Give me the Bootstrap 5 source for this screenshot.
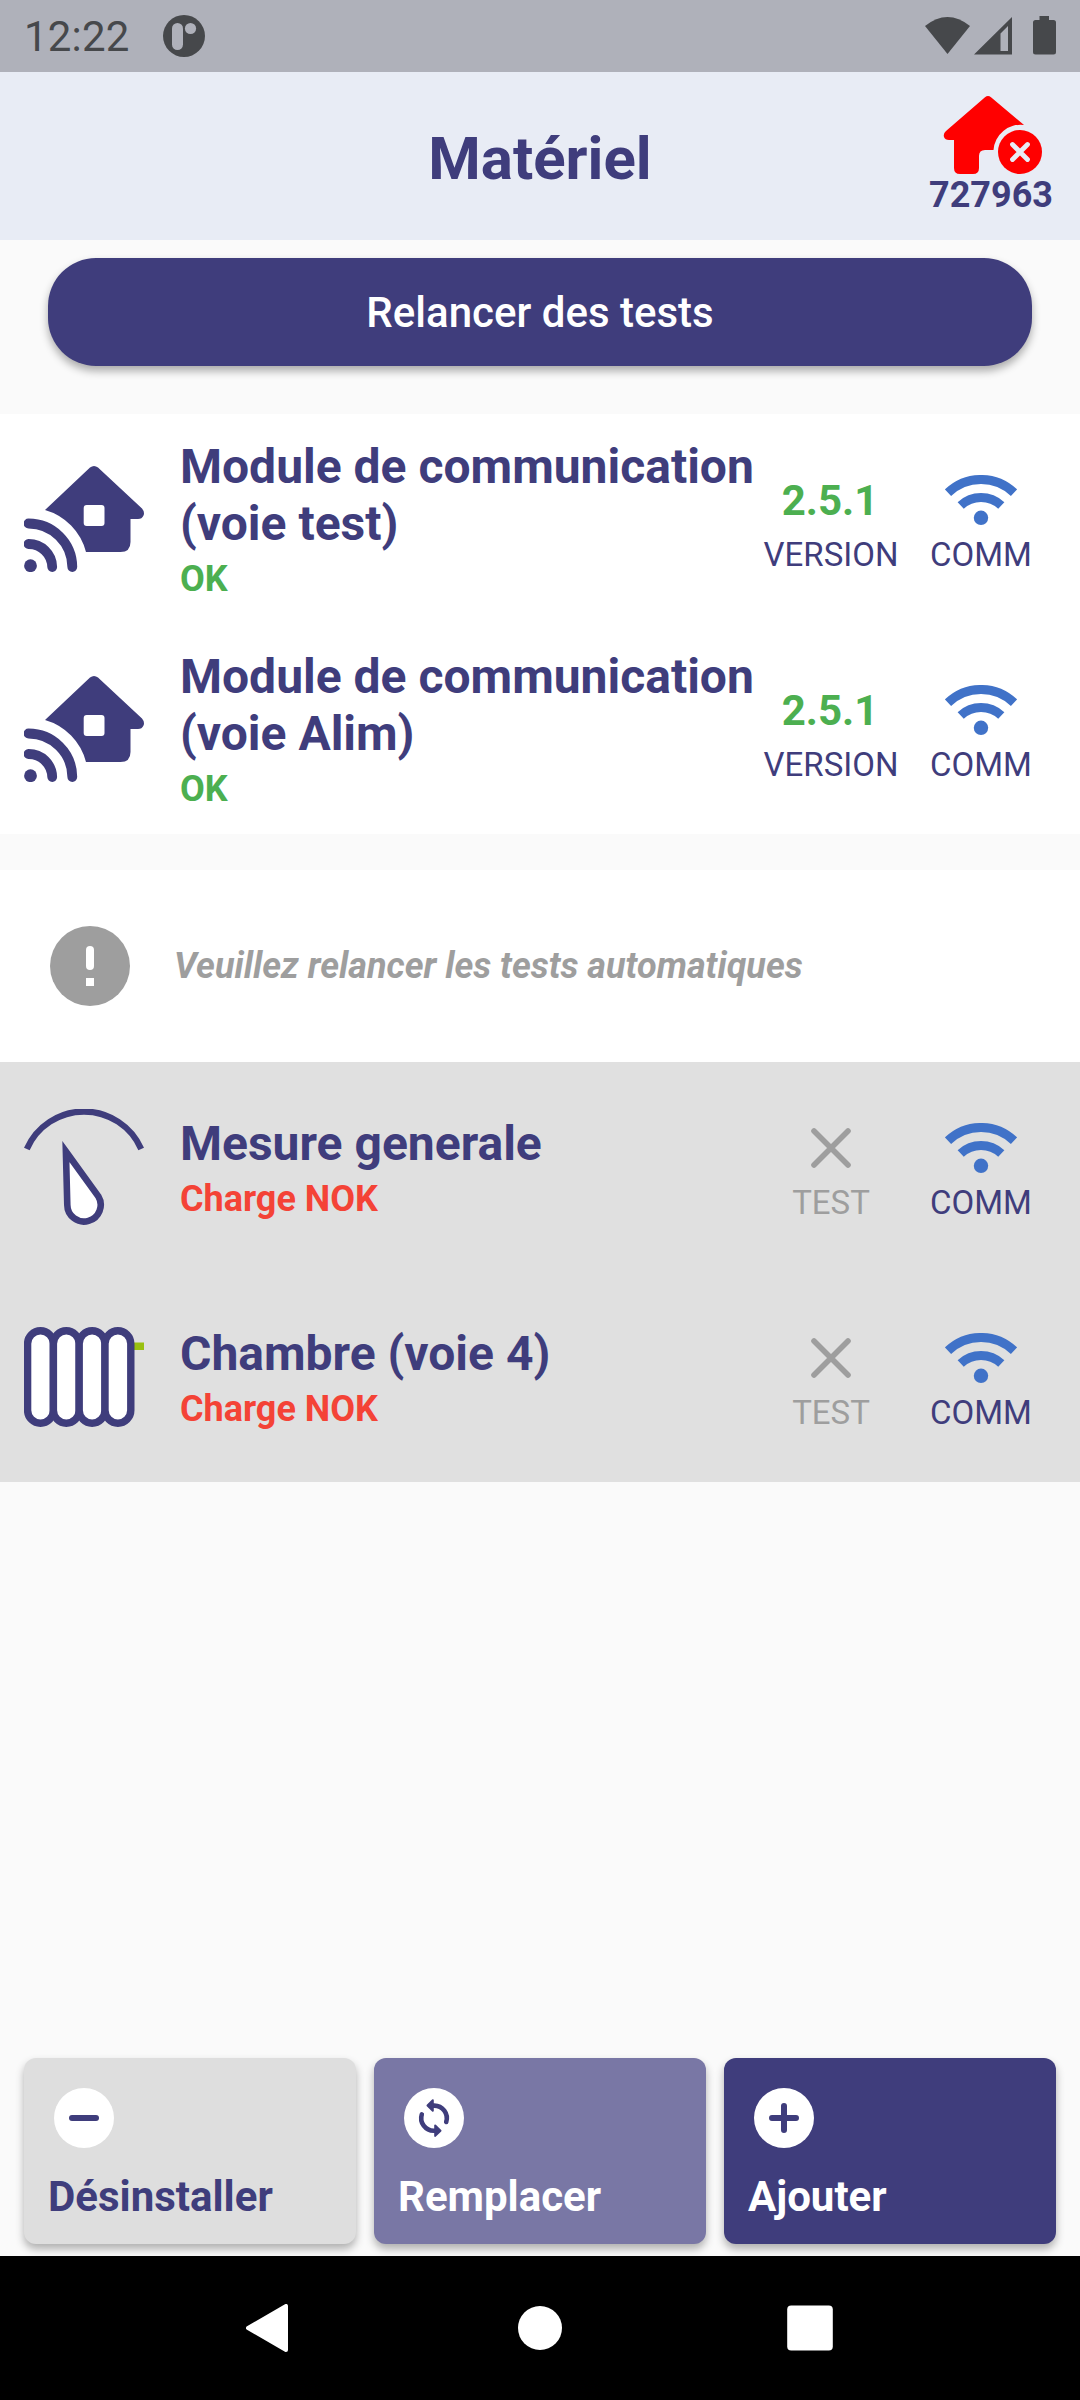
<!DOCTYPE html>
<html lang="fr">
<head>
<meta charset="utf-8">
<meta name="viewport" content="width=device-width, initial-scale=1">
<title>Matériel</title>
<link href="https://cdn.jsdelivr.net/npm/bootstrap@5.3.0/dist/css/bootstrap.min.css" rel="stylesheet">
<style>
  :root { --ink: #3f3d7c; --ok: #4caf50; --nok: #f44336; --muted: #9e9e9e; }
  body { font-family: Roboto, "Liberation Sans", sans-serif; color: var(--ink); background: #fafafa; }
  svg { display: block; flex: none; }
  .screen { width: 1080px; height: 2400px; overflow: hidden; }
  .status-bar { height: 72px; background: #afb1ba; color: #46484b; font-size: 42px; line-height: 50px; padding: 0 24px; }
  .status-time { width: 136px; padding-top: 2px; letter-spacing: .2px; }
  .app-header { height: 168px; background: #e8ecf5; padding: 24px 24px 0; }
  .app-title { font-size: 60px; line-height: 72px; font-weight: 700; padding-top: 27px; }
  .header-side { width: 130px; }
  .site-icon { margin-right: 14px; }
  .site-code { font-size: 36px; line-height: 42px; margin-right: 3px; }
  .retest { padding: 18px 48px 48px; }
  .btn-retest { height: 108px; border: 0; border-radius: 48px; background: var(--ink); color: #fff; font-size: 42px; font-weight: 500; box-shadow: 0 5px 8px rgba(0,0,0,.32); }
  .btn-retest:hover { background: #34326b; color: #fff; }
  .device { height: 210px; padding: 0 24px; }
  .device-icon { width: 120px; margin-right: 36px; }
  .device-name { font-size: 48px; line-height: 57px; font-weight: 700; margin: 0; }
  .device-state { font-size: 36px; line-height: 42px; font-weight: 700; margin-top: 6px; }
  .metric { width: 150px; flex: none; }
  .metric-value { height: 72px; font-size: 42px; line-height: 50px; font-weight: 700; }
  .metric-version { padding: 2px 2px 0 0; }
  .metric-label { font-size: 33px; line-height: 38px; }
  .is-ok { color: var(--ok); }
  .is-nok { color: var(--nok); }
  .is-muted { color: var(--muted); }
  .notice { height: 192px; margin-top: 36px; padding-left: 50px; font-size: 36px; font-weight: 700; gap: 44px; }
  .pending { background: #e0e0e0; }
  .actions { gap: 18px; padding: 0 24px 12px; }
  .btn-action { height: 186px; border: 0; border-radius: 12px; padding: 30px 24px 22px; font-size: 42px; line-height: 50px; font-weight: 700; box-shadow: 0 5px 8px rgba(0,0,0,.3); }
  .btn-action svg { margin: 0 0 24px 6px; }
  .act-remove { background: #dedede; color: var(--ink); }
  .act-replace { background: #7977a5; color: #fff; }
  .act-add { background: var(--ink); color: #fff; }
  .system-nav { height: 144px; background: #000; padding: 0 135px; }
</style>
</head>
<body>
<svg width="0" height="0" class="position-absolute" aria-hidden="true">
  <symbol id="wifi" viewBox="0 0 72 50">
    <g fill="none" stroke="#4072c8" stroke-width="9">
      <path d="M3 17.700A47.800 47.800 0 0 1 69 17.700"/>
      <path d="M15.700 30.500A29.800 29.800 0 0 1 56.300 30.500"/>
    </g>
    <circle cx="36" cy="42.800" r="7.200" fill="#4072c8"/>
  </symbol>
  <symbol id="smart-home" viewBox="0 0 120 106">
    <path fill="#3f3d7c" d="M66 1.600Q70 -1.600 74 1.600L118 42.500Q121 46 119.500 49.500Q118 53 114 53H106.500V76Q106.500 86 96.500 86H62A59 59 0 0 0 21 44Z"/>
    <rect x="59.700" y="39" width="20.800" height="21" rx="3" fill="#fff"/>
    <g fill="none" stroke="#3f3d7c" stroke-width="9.800" stroke-linecap="round">
      <path d="M4.500 57.500A43.800 43.800 0 0 1 48.300 101"/>
      <path d="M4.500 78A23.500 23.500 0 0 1 28.200 101"/>
    </g>
    <circle cx="6.500" cy="99.700" r="6.400" fill="#3f3d7c"/>
  </symbol>
  <symbol id="cross" viewBox="0 0 40 40">
    <path d="M3 3L37 37M37 3L3 37" fill="none" stroke="#9e9e9e" stroke-width="5.600" stroke-linecap="round"/>
  </symbol>
</svg>

<div class="screen d-flex flex-column">
  <div class="status-bar d-flex align-items-center">
    <div class="status-time">12:22</div>
    <svg width="48" height="42" viewBox="0 0 48 42">
      <circle cx="24" cy="21" r="21" fill="#46484b"/>
      <rect x="12" y="8" width="11" height="27" rx="5.500" fill="#afb1ba"/>
      <circle cx="30.500" cy="13.500" r="5.600" fill="#afb1ba"/>
    </svg>
    <svg class="ms-auto" width="132" height="42" viewBox="0 0 132 42" fill="#46484b">
      <path d="M1 11Q23.500 -7 46 11L23.500 39Z"/>
      <path fill-rule="evenodd" d="M50 39.500L88 2V39.500ZM76.500 18.500V36H84V11Z"/>
      <path d="M115.500 1H125V5H129.500Q132 5 132 7.500V37Q132 39.500 129.500 39.500H111.500Q109 39.500 109 37V7.500Q109 5 111.500 5H115.500Z"/>
    </svg>
  </div>

  <header class="app-header d-flex">
    <div class="header-side"></div>
    <h1 class="app-title flex-grow-1 text-center mb-0">Matériel</h1>
    <div class="header-side d-flex flex-column align-items-end">
      <svg class="site-icon" width="104" height="78" viewBox="0 0 104 78" fill="#f00">
        <path d="M47 1.200Q50 -1.200 53 1.200L86 29A27 27 0 0 0 55.500 54H47Q41 54 41 60V72Q41 78 35 78H22Q16 78 16 72V44H11Q7 44 6 41Q5 37.500 8 35Z"/>
        <circle cx="82" cy="56" r="22"/>
        <path d="M74.500 48.500L89.500 63.500M89.500 48.500L74.500 63.500" stroke="#e8ecf5" stroke-width="4.800" stroke-linecap="round"/>
      </svg>
      <div class="site-code fw-bold">727963</div>
    </div>
  </header>

  <main class="flex-grow-1">
    <div class="retest">
      <button type="button" class="btn btn-retest w-100">Relancer des tests</button>
    </div>

    <section class="bg-white">
      <div class="device d-flex align-items-center">
        <div class="device-icon"><svg width="120" height="106"><use href="#smart-home"/></svg></div>
        <div class="flex-grow-1">
          <h2 class="device-name">Module de communication<br>(voie test)</h2>
          <div class="device-state is-ok">OK</div>
        </div>
        <div class="metric text-center">
          <div class="metric-value metric-version is-ok d-flex align-items-center justify-content-center">2.5.1</div>
          <div class="metric-label">VERSION</div>
        </div>
        <div class="metric text-center">
          <div class="metric-value d-flex align-items-center justify-content-center"><svg width="72" height="50"><use href="#wifi"/></svg></div>
          <div class="metric-label">COMM</div>
        </div>
      </div>
      <div class="device d-flex align-items-center">
        <div class="device-icon"><svg width="120" height="106"><use href="#smart-home"/></svg></div>
        <div class="flex-grow-1">
          <h2 class="device-name">Module de communication<br>(voie Alim)</h2>
          <div class="device-state is-ok">OK</div>
        </div>
        <div class="metric text-center">
          <div class="metric-value metric-version is-ok d-flex align-items-center justify-content-center">2.5.1</div>
          <div class="metric-label">VERSION</div>
        </div>
        <div class="metric text-center">
          <div class="metric-value d-flex align-items-center justify-content-center"><svg width="72" height="50"><use href="#wifi"/></svg></div>
          <div class="metric-label">COMM</div>
        </div>
      </div>
    </section>

    <div class="notice bg-white is-muted d-flex align-items-center fst-italic">
      <svg width="80" height="80" viewBox="0 0 80 80">
        <circle cx="40" cy="40" r="40" fill="#9e9e9e"/>
        <rect x="36" y="20" width="8" height="24" rx="4" fill="#fff"/>
        <rect x="36" y="52" width="8" height="8" fill="#fff"/>
      </svg>
      <span>Veuillez relancer les tests automatiques</span>
    </div>

    <section class="pending">
      <div class="device d-flex align-items-center">
        <div class="device-icon">
          <svg width="120" height="116" viewBox="0 0 120 116" stroke="#3f3d7c">
            <path d="M2.800 40A62.400 62.400 0 0 1 117.200 40" fill="none" stroke-width="6.200"/>
            <path d="M41.900 42.500L74.300 87.200A16.700 16.700 0 1 1 43.300 96Z" fill="#fff" stroke-width="6.600" stroke-miterlimit="8"/>
          </svg>
        </div>
        <div class="flex-grow-1">
          <h2 class="device-name">Mesure generale</h2>
          <div class="device-state is-nok">Charge NOK</div>
        </div>
        <div class="metric text-center">
          <div class="metric-value d-flex align-items-center justify-content-center"><svg width="40" height="40"><use href="#cross"/></svg></div>
          <div class="metric-label is-muted">TEST</div>
        </div>
        <div class="metric text-center">
          <div class="metric-value d-flex align-items-center justify-content-center"><svg width="72" height="50"><use href="#wifi"/></svg></div>
          <div class="metric-label">COMM</div>
        </div>
      </div>
      <div class="device d-flex align-items-center">
        <div class="device-icon">
          <svg width="120" height="100" viewBox="0 0 120 100">
            <rect x="108" y="15.500" width="12" height="7.500" fill="#99c011"/>
            <g fill="#fff" stroke="#3f3d7c" stroke-width="7.400">
              <rect x="3.600" y="3.800" width="25.800" height="92.400" rx="12.900"/>
              <rect x="29.400" y="3.800" width="25.800" height="92.400" rx="12.900"/>
              <rect x="55.200" y="3.800" width="25.800" height="92.400" rx="12.900"/>
              <rect x="81" y="3.800" width="25.800" height="92.400" rx="12.900"/>
            </g>
          </svg>
        </div>
        <div class="flex-grow-1">
          <h2 class="device-name">Chambre (voie 4)</h2>
          <div class="device-state is-nok">Charge NOK</div>
        </div>
        <div class="metric text-center">
          <div class="metric-value d-flex align-items-center justify-content-center"><svg width="40" height="40"><use href="#cross"/></svg></div>
          <div class="metric-label is-muted">TEST</div>
        </div>
        <div class="metric text-center">
          <div class="metric-value d-flex align-items-center justify-content-center"><svg width="72" height="50"><use href="#wifi"/></svg></div>
          <div class="metric-label">COMM</div>
        </div>
      </div>
    </section>
  </main>

  <div class="actions d-flex">
    <button type="button" class="btn-action act-remove flex-fill w-100 text-start">
      <svg width="60" height="60" viewBox="0 0 60 60"><circle cx="30" cy="30" r="30" fill="#fff"/><path d="M18 30H42" stroke="#3f3d7c" stroke-width="6" stroke-linecap="round"/></svg>
      Désinstaller
    </button>
    <button type="button" class="btn-action act-replace flex-fill w-100 text-start">
      <svg width="60" height="60" viewBox="0 0 60 60"><circle cx="30" cy="30" r="30" fill="#fff"/>
        <g fill="none" stroke="#3f3d7c" stroke-width="4.600" stroke-linecap="round">
          <path d="M28 17.600H30A12.600 12.600 0 0 1 42.200 34"/>
          <path d="M32 42.800H30A12.600 12.600 0 0 1 17.800 26.400"/>
        </g>
        <path fill="#3f3d7c" stroke="#3f3d7c" stroke-width="2" stroke-linejoin="round" d="M23.500 17.500L28.800 12.300V22.700ZM36.500 42.700L31.200 37.500V47.900Z"/>
      </svg>
      Remplacer
    </button>
    <button type="button" class="btn-action act-add flex-fill w-100 text-start">
      <svg width="60" height="60" viewBox="0 0 60 60"><circle cx="30" cy="30" r="30" fill="#fff"/><path d="M18 30H42M30 18V42" stroke="#3f3d7c" stroke-width="6" stroke-linecap="round"/></svg>
      Ajouter
    </button>
  </div>

  <nav class="system-nav d-flex align-items-center justify-content-around">
    <svg width="48" height="48" viewBox="0 0 48 48"><path d="M2 24L40 2V46Z" fill="#fff" stroke="#fff" stroke-width="4" stroke-linejoin="round"/></svg>
    <svg width="48" height="48" viewBox="0 0 48 48"><circle cx="24" cy="24" r="22" fill="#fff"/></svg>
    <svg width="48" height="48" viewBox="0 0 48 48"><rect x="1.200" y="1.500" width="45.600" height="45" rx="4" fill="#fff"/></svg>
  </nav>
</div>
<script src="https://cdn.jsdelivr.net/npm/bootstrap@5.3.0/dist/js/bootstrap.bundle.min.js"></script>
</body>
</html>
